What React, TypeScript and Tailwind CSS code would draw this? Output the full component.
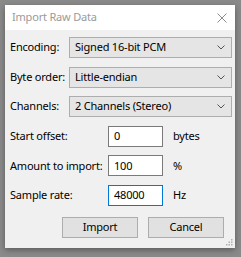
import React from "react";

function Select({ value }: { value: string }) {
  return (
    <div className="flex h-[21px] w-[163px] items-center justify-between border border-[#adadad] bg-[#e5e5e5] pl-[5px] pr-[6px]">
      <span>{value}</span>
      <svg width="8" height="5" viewBox="0 0 8 5" className="text-[#555]">
        <path d="M0.5 0.5 L4 4 L7.5 0.5" fill="none" stroke="currentColor" strokeWidth="1" />
      </svg>
    </div>
  );
}

function Field({ value, unit, focused }: { value: string; unit: string; focused?: boolean }) {
  return (
    <div className="flex items-center">
      <div
        className={
          "flex h-[21px] w-[55px] items-center border bg-white pl-[5px] " +
          (focused ? "border-[#0078d7]" : "border-[#7a7a7a]")
        }
      >
        {value}
      </div>
      <span className="ml-[10px]">{unit}</span>
    </div>
  );
}

export default function App() {
  const rows: [string, React.ReactNode, boolean][] = [
    ["Encoding:", <Select value="Signed 16-bit PCM" />, true],
    ["Byte order:", <Select value="Little-endian" />, true],
    ["Channels:", <Select value="2 Channels (Stereo)" />, true],
    ["Start offset:", <Field value="0" unit="bytes" />, false],
    ["Amount to import:", <Field value="100" unit="%" />, false],
    ["Sample rate:", <Field value="48000" unit="Hz" focused />, false],
  ];

  return (
    <div className="h-[257px] w-[241px] bg-[#8a8a8a] p-[5px] font-['Segoe_UI','Noto_Sans',sans-serif] text-[11px] tracking-[-0.2px] text-black">
      <div className="relative flex h-[243px] w-[230px] flex-col bg-[#f0f0f0] shadow-[0_2px_6px_rgba(0,0,0,0.35)]">
        <div className="flex h-[25px] items-center justify-between bg-white pl-[7px] pr-[8px] text-[#9a9a9a]">
          <span>Import Raw Data</span>
          <svg width="10" height="10" viewBox="0 0 10 10">
            <path d="M0.5 0.5 L9.5 9.5 M9.5 0.5 L0.5 9.5" stroke="#8a8a8a" strokeWidth="1" />
          </svg>
        </div>
        <div className="flex flex-col gap-[8.6px] pl-[5px] pt-[7px]">
          {rows.map(([label, ctl, wide]) => (
            <div key={label} className="flex h-[21px] items-center">
              <span className={"shrink-0 whitespace-nowrap " + (wide ? "w-[59px]" : "w-[98px]")}>{label}</span>
              {ctl}
            </div>
          ))}
        </div>
        <div className="mt-[11px] flex justify-end gap-[10px] pr-[11px]">
          <button className="h-[21px] w-[76px] border border-[#adadad] bg-[#e1e1e1]">Import</button>
          <button className="h-[21px] w-[76px] border border-[#adadad] bg-[#e1e1e1]">Cancel</button>
        </div>
        <svg width="7" height="7" viewBox="0 0 7 7" className="absolute bottom-[2px] right-[2px]">
          <rect x="5" y="0" width="1.5" height="1.5" fill="#b0b0b0" />
          <rect x="2.5" y="2.5" width="1.5" height="1.5" fill="#b0b0b0" />
          <rect x="5" y="2.5" width="1.5" height="1.5" fill="#b0b0b0" />
          <rect x="0" y="5" width="1.5" height="1.5" fill="#b0b0b0" />
          <rect x="2.5" y="5" width="1.5" height="1.5" fill="#b0b0b0" />
          <rect x="5" y="5" width="1.5" height="1.5" fill="#b0b0b0" />
        </svg>
      </div>
    </div>
  );
}
